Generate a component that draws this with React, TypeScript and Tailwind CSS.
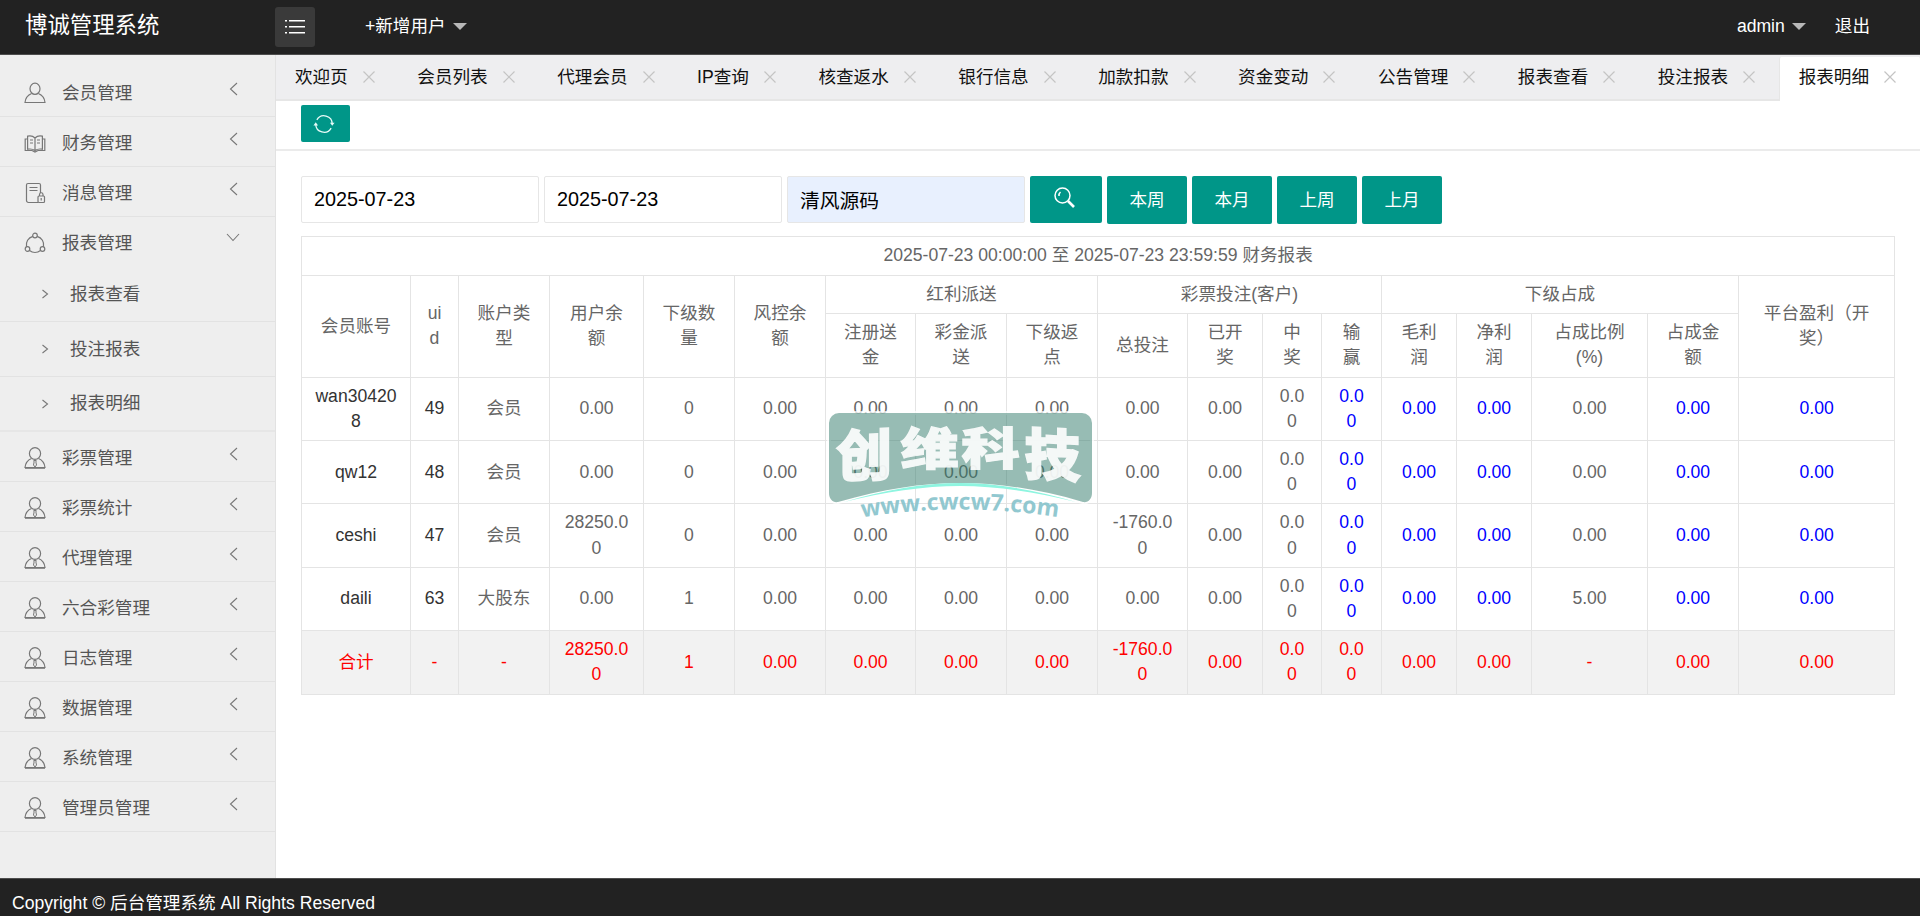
import React from 'react';

const font = { fontFamily: '"Liberation Sans", "Noto Sans CJK SC", sans-serif' };

const tabs = ['欢迎页', '会员列表', '代理会员', 'IP查询', '核查返水', '银行信息', '加款扣款', '资金变动', '公告管理', '报表查看', '投注报表', '报表明细'];

const menuTop = [
  { name: '会员管理', icon: 'user' },
  { name: '财务管理', icon: 'book' },
  { name: '消息管理', icon: 'doc' },
];
const subMenu = ['报表查看', '投注报表', '报表明细'];
const menuBottom = ['彩票管理', '彩票统计', '代理管理', '六合彩管理', '日志管理', '数据管理', '系统管理', '管理员管理'];

const widths = ['w-[109px]', 'w-[48px]', 'w-[91px]', 'w-[94px]', 'w-[91px]', 'w-[91px]', 'w-[90px]', 'w-[91px]', 'w-[91px]', 'w-[90px]', 'w-[75px]', 'w-[59px]', 'w-[60px]', 'w-[75px]', 'w-[75px]', 'w-[116px]', 'w-[91px]', 'w-[156px]'];

const rows = [
  ['wan304208', '49', '会员', '0.00', '0', '0.00', '0.00', '0.00', '0.00', '0.00', '0.00', '0.00', '0.00', '0.00', '0.00', '0.00', '0.00', '0.00'],
  ['qw12', '48', '会员', '0.00', '0', '0.00', '0.00', '0.00', '0.00', '0.00', '0.00', '0.00', '0.00', '0.00', '0.00', '0.00', '0.00', '0.00'],
  ['ceshi', '47', '会员', '28250.00', '0', '0.00', '0.00', '0.00', '0.00', '-1760.00', '0.00', '0.00', '0.00', '0.00', '0.00', '0.00', '0.00', '0.00'],
  ['daili', '63', '大股东', '0.00', '1', '0.00', '0.00', '0.00', '0.00', '0.00', '0.00', '0.00', '0.00', '0.00', '0.00', '5.00', '0.00', '0.00'],
];
const total = ['合计', '-', '-', '28250.00', '1', '0.00', '0.00', '0.00', '0.00', '-1760.00', '0.00', '0.00', '0.00', '0.00', '0.00', '-', '0.00', '0.00'];

const blueCols = [12, 13, 14, 16, 17];

const cell = 'border border-[#e4e4e4] px-[13px] py-[6px] text-center font-normal leading-[25.2px] break-all';

function MenuIcon({ type }: { type: string }) {
  const p = { fill: 'none', stroke: '#777', strokeWidth: 1.2 };
  if (type === 'user')
    return (
      <svg width="22" height="22" viewBox="0 0 22 22" {...p}>
        <ellipse cx="11" cy="6.800" rx="5" ry="5.600" />
        <path d="M7.600 11.500C4 13 1.500 15.500 1 20.500h20c-.5-5-3-7.500-6.600-9" />
      </svg>
    );
  if (type === 'book')
    return (
      <svg width="22" height="22" viewBox="0 0 22 22" {...p}>
        <path d="M11 6C9 4 6 3.600 3.600 4.200v13C6 16.800 9 17 11 18.500c2-1.500 5-1.700 7.400-1.300v-13C16 3.600 13 4 11 6zM11 6v12.500M3.600 7H1.200v11.500H8l3 1.500 3-1.500h6.800V7h-2.400M6 8h3M6 11h3M13 8h3M13 11h3" />
      </svg>
    );
  if (type === 'doc')
    return (
      <svg width="22" height="22" viewBox="0 0 22 22" {...p}>
        <path d="M14 20.500H4.500A2 2 0 0 1 2.500 18.500V3a1.500 1.500 0 0 1 1.500-1.500h11a1.500 1.500 0 0 1 1.500 1.500v8M5.500 5.500h8M5.500 8.500h8" />
        <rect x="14" y="14" width="6.500" height="6.500" rx="1" />
        <path d="M15.500 14v-1.500a1.700 1.700 0 0 1 3.500 0V14M17.200 16v2.500" />
      </svg>
    );
  if (type === 'share')
    return (
      <svg width="22" height="22" viewBox="0 0 22 22" {...p}>
        <circle cx="11" cy="3.500" r="2.300" />
        <circle cx="3.500" cy="17" r="2.300" />
        <circle cx="18.500" cy="17" r="2.300" />
        <path d="M8.800 4.300A9 9 0 0 0 2.500 14.800M13.200 4.300A9 9 0 0 1 19.500 14.800M5.500 18.500a9 9 0 0 0 11 0" />
      </svg>
    );
  return (
    <svg width="22" height="22" viewBox="0 0 22 22" {...p}>
      <ellipse cx="11" cy="6.500" rx="5.600" ry="5.800" />
      <path d="M7.500 11.500C3.800 13 1.500 16 1 20.500h20c-.5-4.500-2.800-7.500-6.500-9" />
      <path d="M9.800 13.500h2.400l-.3 1.500.6 3-1.500 2-1.500-2 .6-3z" strokeWidth="1" />
      <path d="M1 21h20" strokeWidth="1.600" />
    </svg>
  );
}

function Chevron({ down }: { down?: boolean }) {
  if (down)
    return (
      <svg width="14" height="9" viewBox="0 0 14 9" fill="none" stroke="#777" strokeWidth="1.100">
        <path d="M1 1l6 6.500L13 1" />
      </svg>
    );
  return (
    <svg width="9" height="14" viewBox="0 0 9 14" fill="none" stroke="#777" strokeWidth="1.100">
      <path d="M8 1L1.500 7 8 13" />
    </svg>
  );
}

function MenuItem({ name, icon, down }: { name: string; icon: string; down?: boolean }) {
  return (
    <div className={`flex h-[50px] items-center pl-[24px] pr-[35px] ${down ? '' : 'border-b border-[#e2e2e2]'}`}>
      <span className="mt-[2px] flex">
        <MenuIcon type={icon} />
      </span>
      <span className="ml-[16px] flex-1 pt-[3px] text-[17.6px] text-[#555]">{name}</span>
      <span className={`flex w-[14px] justify-center ${down ? 'mb-[10px]' : 'mb-[5px]'}`}>
        <Chevron down={down} />
      </span>
    </div>
  );
}

function Caret() {
  return <span className="ml-[7px] mt-[1px] inline-block border-x-[7px] border-t-[7px] border-x-transparent border-t-[#b8b8b8]" />;
}

const wmShape = 'M15 4H258a10 10 0 0 1 10 10V84c0 6-4 10-9 9C215 80 175 74 136 74S60 80 14 93c-5 1-9-3-9-9V14A10 10 0 0 1 15 4z';

function Watermark() {
  return (
    <svg className="pointer-events-none absolute left-[824px] top-[409px]" width="272" height="124" viewBox="0 0 272 124">
      <path d={wmShape} fill="none" stroke="#ffffff" strokeOpacity="0.75" strokeWidth="4" />
      <path d={wmShape} fill="#2f7a69" opacity="0.5" />
      <path d="M20 93C60 81 100 74 136 74s76 7 116 19C212 83 172 77 136 77S60 83 20 93z" fill="#8ef5e0" />
      <g fill="#ffffff" stroke="#ffffff" strokeWidth="1.500" fontFamily='"Noto Sans CJK SC", sans-serif' fontWeight="900" fontSize="56" textAnchor="middle" opacity="0.9">
        <text transform="translate(40 67) skewY(-3)">创</text>
        <text transform="translate(105.500 56) scale(1.040 0.8)">维</text>
        <text transform="translate(166.500 56) scale(1.040 0.8)">科</text>
        <text transform="translate(228.500 67) skewY(3)">技</text>
      </g>
      <defs>
        <path id="wm-arc" d="M33 109Q136 92 239 109" />
      </defs>
      <text fill="#86c3cc" fontFamily='"Open Sans", "Liberation Sans", sans-serif' fontWeight="700" fontSize="23" opacity="0.9" textAnchor="middle">
        <textPath href="#wm-arc" startOffset="50%">
          www.cwcw7.com
        </textPath>
      </text>
    </svg>
  );
}

export default function App() {
  return (
    <div className="relative flex h-screen flex-col overflow-hidden bg-white" style={font}>
      <header className="flex h-[55px] shrink-0 items-center border-b border-[#4d4d4d] bg-[#222222] text-white">
        <div className="mb-[2px] w-[275px] pl-[25px] text-[22.4px]">博诚管理系统</div>
        <button className="flex h-[40px] w-[40px] items-center justify-center rounded-[3px] bg-[#3a3a3a]">
          <svg width="20" height="16" viewBox="0 0 20 16" fill="#ffffff">
            <rect x="0" y="1" width="2" height="1.500" />
            <rect x="0" y="7" width="2" height="1.500" />
            <rect x="0" y="13" width="2" height="1.500" />
            <rect x="4" y="1" width="16" height="1.500" />
            <rect x="4" y="7" width="16" height="1.500" />
            <rect x="4" y="13" width="16" height="1.500" />
          </svg>
        </button>
        <div className="mb-[2px] ml-[50px] flex items-center text-[17.6px]">
          +新增用户
          <Caret />
        </div>
        <div className="mb-[2px] ml-auto flex items-center pr-[50px] text-[17.6px]">
          admin
          <Caret />
          <span className="ml-[29px]">退出</span>
        </div>
      </header>

      <div className="flex min-h-0 flex-1">
        <aside className="w-[276px] shrink-0 border-r border-[#e2e2e2] bg-[#eeeeee] pt-[12px]">
          {menuTop.map((m) => (
            <MenuItem key={m.name} name={m.name} icon={m.icon} />
          ))}
          <MenuItem name="报表管理" icon="share" down />
          {subMenu.map((s, i) => (
            <div key={s} className={`flex h-[55px] items-center pl-[41px] text-[17.6px] text-[#555] ${i < 2 ? 'border-b border-[#e2e2e2]' : 'border-b-2 border-[#e6e6e6]'}`}>
              <svg width="8" height="10" viewBox="0 0 8 10" fill="none" stroke="#777" strokeWidth="1.100">
                <path d="M1.500 1L6.500 5l-5 4" />
              </svg>
              <span className="ml-[21px]">{s}</span>
            </div>
          ))}
          {menuBottom.map((m) => (
            <MenuItem key={m} name={m} icon="person" />
          ))}
        </aside>

        <main className="min-w-0 flex-1">
          <div className="flex h-[46px] border-b-2 border-[#e6e6e6] bg-[#eeeef0]">
            {tabs.map((t, i) => {
              const active = i === tabs.length - 1;
              return (
                <div
                  key={t}
                  className={`flex items-center pl-[19px] pr-[23.5px] text-[17.6px] text-[#111] ${active ? 'mt-[2px] -mb-[2px] h-[44px] rounded-t-[2px] border-x border-[#e6e6e6] bg-white pb-[4px]' : ''}`}
                >
                  <span className="whitespace-nowrap">{t}</span>
                  <svg className="ml-[15px]" width="12" height="12" viewBox="0 0 12 12" stroke="#c4c4c4" strokeWidth="1.200">
                    <path d="M.5.5l11 11M11.500.5l-11 11" />
                  </svg>
                </div>
              );
            })}
          </div>

          <div className="h-[50px] border-b-2 border-[#ebebeb] pl-[25px] pt-[4px]">
            <button className="flex h-[37px] w-[49px] items-center justify-center rounded-[2px] bg-[#009688] pr-[4px]">
              <svg width="22" height="22" viewBox="0 0 24 24" fill="none" stroke="#e8fbf8" strokeWidth="1.400">
                <path d="M4.200 7.500A9 9 0 0 1 21 12" />
                <path d="M18.500 10.500h5L21 14z" fill="#e8fbf8" stroke="none" />
                <path d="M19.800 16.500A9 9 0 0 1 3 12" />
                <path d="M.5 13.500h5L3 10z" fill="#e8fbf8" stroke="none" />
              </svg>
            </button>
          </div>

          <div className="px-[25px] pt-[25px]">
            <div className="flex items-start gap-[5px]">
              <input readOnly value="2025-07-23" className="h-[47px] w-[238px] rounded-[2px] border border-[#e6e6e6] bg-white px-[12px] text-[19.8px] text-black outline-none" />
              <input readOnly value="2025-07-23" className="h-[47px] w-[238px] rounded-[2px] border border-[#e6e6e6] bg-white px-[12px] text-[19.8px] text-black outline-none" />
              <input readOnly value="清风源码" className="h-[47px] w-[238px] rounded-[2px] border border-[#e6e6e6] bg-[#e8f0fe] px-[12px] text-[19.8px] text-black outline-none" />
              <button className="flex h-[47px] w-[72px] items-center justify-center rounded-[2px] bg-[#009688]">
                <svg className="mb-[3px] mr-[2px]" width="22" height="22" viewBox="0 0 22 22" fill="none" stroke="#ffffff" strokeWidth="1.500">
                  <circle cx="8.500" cy="8.500" r="7.500" />
                  <path d="M5 9a4.500 4.500 0 0 1 1.500-4" />
                  <path d="M14 14l6 6" strokeWidth="2.600" />
                </svg>
              </button>
              {['本周', '本月', '上周', '上月'].map((b) => (
                <button key={b} className="h-[48px] w-[80px] rounded-[2px] bg-[#009688] text-[17.6px] text-white">
                  {b}
                </button>
              ))}
            </div>

            <table className="mt-[12px] w-[1593px] table-fixed border-collapse text-[17.6px] text-[#666]">
              <colgroup>
                {widths.map((w, i) => (
                  <col key={i} className={w} />
                ))}
              </colgroup>
              <thead>
                <tr className="h-[39px]">
                  <th colSpan={18} className={cell}>
                    2025-07-23 00:00:00 至 2025-07-23 23:59:59 财务报表
                  </th>
                </tr>
                <tr>
                  <th rowSpan={2} className={cell}>会员账号</th>
                  <th rowSpan={2} className={cell}>uid</th>
                  <th rowSpan={2} className={cell}>账户类型</th>
                  <th rowSpan={2} className={cell}>用户余额</th>
                  <th rowSpan={2} className={cell}>下级数量</th>
                  <th rowSpan={2} className={cell}>风控余额</th>
                  <th colSpan={3} className={cell}>红利派送</th>
                  <th colSpan={4} className={cell}>彩票投注(客户)</th>
                  <th colSpan={4} className={cell}>下级占成</th>
                  <th rowSpan={2} className={cell}>平台盈利（开奖）</th>
                </tr>
                <tr>
                  {['注册送金', '彩金派送', '下级返点', '总投注', '已开奖', '中奖', '输赢', '毛利润', '净利润', '占成比例 (%)', '占成金额'].map((h) => (
                    <th key={h} className={`${cell} ${h.includes('(') ? 'break-normal' : ''}`}>
                      {h}
                    </th>
                  ))}
                </tr>
              </thead>
              <tbody>
                {rows.map((r) => (
                  <tr key={r[0]}>
                    {r.map((v, i) => (
                      <td key={i} className={`${cell} ${i < 2 ? 'text-[#333]' : blueCols.includes(i) ? 'text-[#0000ff]' : ''}`}>
                        {v}
                      </td>
                    ))}
                  </tr>
                ))}
                <tr className="bg-[#f2f2f2]">
                  {total.map((v, i) => (
                    <td key={i} className={`${cell} text-[#ff0000]`}>
                      {v}
                    </td>
                  ))}
                </tr>
              </tbody>
            </table>
          </div>
        </main>
      </div>

      <footer className="flex h-[38px] shrink-0 items-center border-t border-[#4d4d4d] bg-[#222222] pl-[12px] pt-[12px] text-[17.6px] text-white">
        Copyright © 后台管理系统 All Rights Reserved
      </footer>

      <Watermark />
    </div>
  );
}
